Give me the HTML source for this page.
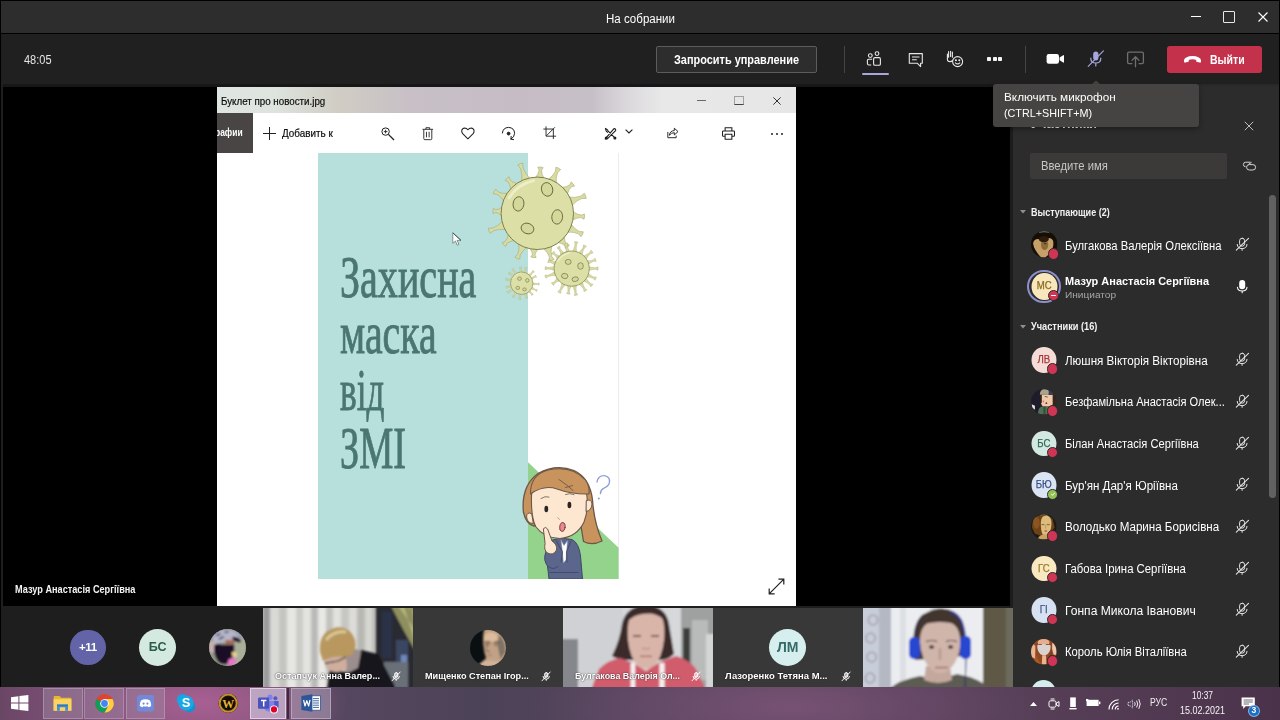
<!DOCTYPE html>
<html><head><meta charset="utf-8"><title>Teams</title>
<style>
*{box-sizing:border-box;margin:0;padding:0}
html,body{width:1280px;height:720px;overflow:hidden;background:#000;font-family:"Liberation Sans",sans-serif;}
.a{position:absolute}
.tx{position:absolute;white-space:nowrap;transform-origin:left top;display:block}
svg{position:absolute;overflow:visible}
#titlebar{left:1px;top:1px;width:1278px;height:32px;background:#2d2d2d;}
#toolbar{left:1px;top:34px;width:1278px;height:53px;background:linear-gradient(180deg,#202020 0,#202020 49.5px,#171717 50.5px,#161616 53px);}
#stage{left:3px;top:87px;width:1007px;height:519px;background:#000}
#strip{left:1px;top:606px;width:1012px;height:82px;background:#1e1e1e}
#panel{left:1013px;top:84px;width:266px;height:604px;background:linear-gradient(180deg,#262626 0,#2c2c2c 3px,#2c2c2c 100%);}
#pgap{left:1010px;top:87px;width:3px;height:601px;background:#1d1d1d}
#lgap{left:1px;top:34px;width:2px;height:572px;background:#1f1f1f}
</style></head><body>
<div id="titlebar" class="a"></div><div id="toolbar" class="a"></div><div id="lgap" class="a"></div><div id="stage" class="a"></div><div id="pgap" class="a"></div><div id="panel" class="a"></div><div id="strip" class="a"></div>
<span class="tx" style="left:605.80px;top:12.84px;font-size:12px;line-height:12px;color:#fff;transform:scaleX(0.9617);">На собрании</span>
<div class="a" style="left:1191px;top:16px;width:10px;height:1px;background:#fff"></div>
<div class="a" style="left:1223px;top:11px;width:12px;height:12px;border:1px solid #e8e8e8;border-radius:1px"></div>
<svg style="left:1258px;top:11.5px" width="10" height="10" viewBox="0 0 10 10"><path d="M0.5 0.5L9.5 9.5M9.5 0.5L0.5 9.5" stroke="#fff" stroke-width="1.1" fill="none"/></svg>
<span class="tx" style="left:24.00px;top:53.84px;font-size:12px;line-height:12px;color:#e6e6e6;transform:scaleX(0.9157);">48:05</span>
<div class="a" style="left:656px;top:46px;width:161px;height:27px;border:1px solid #5c5c5c;border-radius:2px;background:#2d2d2d"></div>
<span class="tx" style="left:673.80px;top:53.00px;font-size:13px;line-height:13px;color:#fff;font-weight:700;transform:scaleX(0.8412);">Запросить управление</span>
<div class="a" style="left:844px;top:46px;width:1px;height:27px;background:#444"></div>
<div class="a" style="left:1025px;top:46px;width:1px;height:27px;background:#444"></div>
<svg style="left:866px;top:51px" width="16" height="16" viewBox="0 0 16 16" fill="none" stroke="#e8e8e8" stroke-width="1.1">
<circle cx="4.3" cy="4.6" r="1.9"/><circle cx="11" cy="2.6" r="1.9"/>
<path d="M6.2 8.3H2.6Q1.4 8.3 1.4 9.5V12.6Q1.4 14 3 14H5.2"/>
<rect x="7.6" y="6.6" width="6.8" height="7.6" rx="1.3"/></svg>
<div class="a" style="left:862px;top:73px;width:27px;height:2px;background:#a6a7dc;border-radius:1px"></div>
<svg style="left:908px;top:52px" width="16" height="16" viewBox="0 0 16 16" fill="none" stroke="#e8e8e8" stroke-width="1.1">
<path d="M1.3 1.6H14.3V11.2H12.6V14.6L9.2 11.2H1.3Z" stroke-linejoin="round"/><path d="M4 5H11.5M4 7.8H8.8"/></svg>
<svg style="left:946px;top:50px" width="18" height="18" viewBox="0 0 18 18" fill="none" stroke="#e8e8e8" stroke-width="1.1">
<path d="M2.6 1.6V7.2M4.6 1.2V6.4M6.4 2V7.2M1.4 4V9.2Q1.4 11.6 4 11.6Q5.6 11.6 6.4 10.6" stroke-linecap="round"/>
<circle cx="11.6" cy="11.6" r="5"/><circle cx="9.9" cy="10.3" r="0.5" fill="#e8e8e8"/><circle cx="13.3" cy="10.3" r="0.5" fill="#e8e8e8"/><path d="M9.4 12.8Q11.6 15 13.8 12.8" stroke-linecap="round"/></svg>
<div class="a" style="left:987.3px;top:57.2px;width:3.8px;height:4px;background:#f4f4f4;border-radius:0.8px"></div>
<div class="a" style="left:992.8px;top:57.2px;width:3.8px;height:4px;background:#f4f4f4;border-radius:0.8px"></div>
<div class="a" style="left:998.3px;top:57.2px;width:3.8px;height:4px;background:#f4f4f4;border-radius:0.8px"></div>
<svg style="left:1046px;top:53px" width="19" height="12" viewBox="0 0 19 12"><rect x="0.6" y="1" width="12.4" height="9.8" rx="2.2" fill="#fff"/><path d="M13.6 4.6L17.2 2.2Q18 1.8 18 2.8V9Q18 10 17.2 9.6L13.6 7.2Z" fill="#fff"/></svg>
<svg style="left:1087px;top:50px" width="18" height="18" viewBox="0 0 18 18" fill="none" stroke="#a6a7dc">
<rect x="6.2" y="1.4" width="5.2" height="9" rx="2.6" fill="#a6a7dc" stroke="none"/>
<path d="M3.8 8.2Q3.8 13 8.8 13Q13.8 13 13.8 8.2M8.8 13V16" stroke-width="1.2" stroke-linecap="round"/>
<path d="M1.2 16.4L16.4 0.8" stroke-width="1.1" stroke-linecap="round"/></svg>
<svg style="left:1126px;top:51px" width="19" height="17" viewBox="0 0 19 17" fill="none" stroke="#6f6f6f" stroke-width="1.3">
<path d="M6.4 12.6H3Q1.6 12.6 1.6 11.2V2.6Q1.6 1.2 3 1.2H16Q17.4 1.2 17.4 2.6V11.2Q17.4 12.6 16 12.6H12.6"/>
<path d="M9.5 15.8V6.2M6 9.4L9.5 5.8L13 9.4" stroke-linecap="round" stroke-linejoin="round"/></svg>
<div class="a" style="left:1167px;top:46px;width:95px;height:27px;background:#c4314b;border-radius:3px"></div>
<svg style="left:1183px;top:55px" width="19" height="9" viewBox="0 0 19 9"><path d="M1 5.6Q1 3.4 3.2 2.4Q6 1.1 9.5 1.1Q13 1.1 15.8 2.4Q18 3.4 18 5.6V6.6Q18 7.8 16.8 7.6L14.2 7.1Q13.2 6.9 13.2 5.9V4.9Q11.6 4.2 9.5 4.2Q7.4 4.2 5.8 4.9V5.9Q5.8 6.9 4.8 7.1L2.2 7.6Q1 7.8 1 6.6Z" fill="#fff"/></svg>
<span class="tx" style="left:1209.70px;top:53.00px;font-size:13px;line-height:13px;color:#fff;font-weight:700;transform:scaleX(0.8076);">Выйти</span>
<svg style="left:1244px;top:121px" width="10" height="10" viewBox="0 0 10 10"><path d="M0.8 0.8L9.2 9.2M9.2 0.8L0.8 9.2" stroke="#cfcfcf" stroke-width="0.9" fill="none"/></svg>
<svg style="left:1242px;top:160px" width="15" height="12" viewBox="1242 160 15 12" fill="none" stroke="#d4d4d4" stroke-width="1"><path d="M1250.6 162.2H1245.8Q1243.4 162.2 1243.4 164.5Q1243.4 166.6 1245.6 166.8"/><rect x="1246.6" y="164.6" width="9" height="5.4" rx="2.7"/><path d="M1248.4 164.4L1251.6 162.3"/></svg>
<div class="a" style="left:1030px;top:152.5px;width:197px;height:26.5px;background:#3b3a39;border-radius:2px"></div>
<span class="tx" style="left:1040.50px;top:159.84px;font-size:12px;line-height:12px;color:#c8c6c4;transform:scaleX(0.9384);">Введите имя</span>
<div class="a" style="left:1269px;top:195px;width:7px;height:303px;background:#616161;border-radius:3.5px"></div>
<span class="tx" style="left:1031.00px;top:116.35px;font-size:14px;line-height:14px;color:#fff;font-weight:700;transform:scaleX(0.9173);">Участники</span>
<svg style="left:1019.5px;top:210px" width="6" height="4" viewBox="0 0 6 4"><path d="M0 0H6L3 3.6Z" fill="#8f8f8f"/></svg>
<span class="tx" style="left:1030.70px;top:207.53px;font-size:10px;line-height:10px;color:#f2f2f2;font-weight:700;transform:scaleX(0.9012);">Выступающие (2)</span>
<svg style="left:1019.5px;top:325.4px" width="6" height="4" viewBox="0 0 6 4"><path d="M0 0H6L3 3.6Z" fill="#8f8f8f"/></svg>
<span class="tx" style="left:1030.70px;top:322.24px;font-size:10px;line-height:10px;color:#f2f2f2;font-weight:700;transform:scaleX(0.9228);">Участники (16)</span>
<svg style="left:1030.8px;top:231.3px" width="26.4" height="26.4" viewBox="0 0 26 26"><defs><clipPath id="c1"><circle cx="13.0" cy="13.0" r="13.0"/></clipPath><filter id="f1" x="-10%" y="-10%" width="120%" height="120%"><feGaussianBlur stdDeviation="0.55"/></filter></defs><g clip-path="url(#c1)"><rect width="26" height="26" fill="#140e07"/><g filter="url(#f1)"><path d="M2 12Q3 7 9 8L18 7Q23 8 22 14Q21 21 14 26H10Q3 19 2 12Z" fill="#c5a067"/><ellipse cx="13.4" cy="13.6" rx="3.6" ry="5.2" fill="#8d6c3a"/><ellipse cx="12.6" cy="8" rx="5" ry="3" fill="#2a1a0c"/><ellipse cx="14" cy="12.4" rx="1.2" ry="0.8" fill="#4a3418"/><path d="M8 1.2Q13 0.2 18 1.2" stroke="#c8c8c8" stroke-width="0.6" fill="none"/></g></g></svg>
<div class="a" style="left:1047.8px;top:248.2px;width:11.6px;height:11.6px;border-radius:50%;background:#d03555;border:1.7px solid #2a2a2a"></div>
<span class="tx" style="left:1064.50px;top:239.74px;font-size:12px;line-height:12px;color:#fff;transform:scaleX(0.9377);">Булгакова Валерія Олексіївна</span>
<svg style="left:1234px;top:236.1px" width="16" height="17" viewBox="0 0 16 17" fill="none" stroke="#e4e4e4" stroke-width="1" stroke-linecap="round"><rect x="5.6" y="2.2" width="5" height="8" rx="2.5"/><path d="M3.2 8.4Q3.4 12.6 8.1 12.6Q12.8 12.6 13 8.4M8.1 12.8V14.4"/><path d="M2.3 14.2L14.5 2.4" stroke-width="1.1"/></svg>
<div class="a" style="left:1027.2px;top:269.6px;width:33.8px;height:33.8px;border-radius:50%;border:2px solid #8d8fcc"></div>
<div class="a" style="left:1030.8px;top:273.2px;width:26.5px;height:26.5px;border-radius:50%;background:#f8e6bd;color:#8a6a1e;font-size:10px;line-height:26.5px;text-align:center;letter-spacing:0;transform:scaleX(0.96);-webkit-text-stroke:0.25px #8a6a1e">МС</div>
<div class="a" style="left:1047.8px;top:289.7px;width:11.6px;height:11.6px;border-radius:50%;background:#d03555;border:1.7px solid #2a2a2a"></div><div class="a" style="left:1051.2px;top:294.8px;width:4.8px;height:1.4px;background:#fff;border-radius:1px"></div>
<span class="tx" style="left:1064.50px;top:275.89px;font-size:11px;line-height:11px;color:#fff;font-weight:700;transform:scaleX(0.9964);">Мазур Анастасія Сергіївна</span>
<span class="tx" style="left:1064.50px;top:290.26px;font-size:9.5px;line-height:9.5px;color:#a6a6a6;transform:scaleX(1.0622);">Инициатор</span>
<svg style="left:1234px;top:278.0px" width="16" height="17" viewBox="0 0 16 17" fill="none" stroke="#fff" stroke-width="1.1" stroke-linecap="round"><rect x="5.2" y="2" width="6" height="9.2" rx="3" fill="#fff" stroke="none"/><path d="M3.4 9.2Q3.8 13 8.2 13Q12.6 13 13 9.2M8.2 13.2V14.8"/></svg>
<div class="a" style="left:1030.8px;top:347.2px;width:25.6px;height:25.6px;border-radius:50%;background:#f6dcd6;color:#a4373a;font-size:10px;line-height:25.6px;text-align:center;letter-spacing:0;transform:scaleX(0.96);-webkit-text-stroke:0.25px #a4373a">ЛВ</div>
<div class="a" style="left:1046.8px;top:363.4px;width:11.6px;height:11.6px;border-radius:50%;background:#d03555;border:1.7px solid #2a2a2a"></div>
<span class="tx" style="left:1064.50px;top:354.54px;font-size:12px;line-height:12px;color:#fff;transform:scaleX(0.9679);">Люшня Вікторія Вікторівна</span>
<svg style="left:1234px;top:351.2px" width="16" height="17" viewBox="0 0 16 17" fill="none" stroke="#e4e4e4" stroke-width="1" stroke-linecap="round"><rect x="5.6" y="2.2" width="5" height="8" rx="2.5"/><path d="M3.2 8.4Q3.4 12.6 8.1 12.6Q12.8 12.6 13 8.4M8.1 12.8V14.4"/><path d="M2.3 14.2L14.5 2.4" stroke-width="1.1"/></svg>
<svg style="left:1030.8px;top:388.9px" width="25.6" height="25.6" viewBox="0 0 26 26"><defs><clipPath id="c2"><circle cx="13.0" cy="13.0" r="13.0"/></clipPath><filter id="f2" x="-10%" y="-10%" width="120%" height="120%"><feGaussianBlur stdDeviation="0.55"/></filter></defs><g clip-path="url(#c2)"><rect width="26" height="26" fill="#26222d"/><g filter="url(#f2)"><rect x="0" y="0" width="10" height="26" fill="#1e1a2c"/><rect x="18" y="2" width="8" height="18" fill="#33281f"/><path d="M10.2 6H22V15Q22 18 18 18H13Q10.2 17 10.2 13Z" fill="#f0c9aa"/><path d="M9 5.8Q9 0 14 0.2Q18.5 0.4 18.4 3.2L18 6Z" fill="#aaa38c"/><path d="M18 1Q23 2 23 8L22.4 6H18Z" fill="#3a3a55"/><path d="M7 26Q7 18 12 17.6H18.4V26Z" fill="#4f6f55"/><rect x="12.6" y="18" width="2.2" height="8" fill="#35503b"/><path d="M0.6 15.4L4 17V21L1.4 19Z" fill="#e8e0e0"/><circle cx="15.6" cy="14.4" r="0.9" fill="#6a2a20"/><circle cx="12.6" cy="12.6" r="0.9" fill="#e07868"/><rect x="9.8" y="6" width="1.2" height="8" fill="#3a2618"/><path d="M14 7.6L17 8.2" stroke="#3a2618" stroke-width="0.7"/></g></g></svg><!--401.7-->
<div class="a" style="left:1046.8px;top:405.1px;width:11.6px;height:11.6px;border-radius:50%;background:#d03555;border:1.7px solid #2a2a2a"></div>
<span class="tx" style="left:1064.50px;top:396.24px;font-size:12px;line-height:12px;color:#fff;transform:scaleX(0.9239);">Безфамільна Анастасія Олек...</span>
<svg style="left:1234px;top:392.9px" width="16" height="17" viewBox="0 0 16 17" fill="none" stroke="#e4e4e4" stroke-width="1" stroke-linecap="round"><rect x="5.6" y="2.2" width="5" height="8" rx="2.5"/><path d="M3.2 8.4Q3.4 12.6 8.1 12.6Q12.8 12.6 13 8.4M8.1 12.8V14.4"/><path d="M2.3 14.2L14.5 2.4" stroke-width="1.1"/></svg>
<div class="a" style="left:1030.8px;top:430.6px;width:25.6px;height:25.6px;border-radius:50%;background:#d3e8e0;color:#2f6b55;font-size:10px;line-height:25.6px;text-align:center;letter-spacing:0;transform:scaleX(0.96);-webkit-text-stroke:0.25px #2f6b55">БС</div>
<div class="a" style="left:1046.8px;top:446.8px;width:11.6px;height:11.6px;border-radius:50%;background:#d03555;border:1.7px solid #2a2a2a"></div>
<span class="tx" style="left:1064.50px;top:437.94px;font-size:12px;line-height:12px;color:#fff;transform:scaleX(0.9286);">Білан Анастасія Сергіївна</span>
<svg style="left:1234px;top:434.6px" width="16" height="17" viewBox="0 0 16 17" fill="none" stroke="#e4e4e4" stroke-width="1" stroke-linecap="round"><rect x="5.6" y="2.2" width="5" height="8" rx="2.5"/><path d="M3.2 8.4Q3.4 12.6 8.1 12.6Q12.8 12.6 13 8.4M8.1 12.8V14.4"/><path d="M2.3 14.2L14.5 2.4" stroke-width="1.1"/></svg>
<div class="a" style="left:1030.8px;top:472.3px;width:25.6px;height:25.6px;border-radius:50%;background:#dbe4f3;color:#3c5288;font-size:10px;line-height:25.6px;text-align:center;letter-spacing:0;transform:scaleX(0.96);-webkit-text-stroke:0.25px #3c5288">БЮ</div>
<div class="a" style="left:1046.8px;top:488.5px;width:11.6px;height:11.6px;border-radius:50%;background:#92c353;border:1.6px solid #2c2c2c"></div><svg style="left:1049.6px;top:491.3px" width="6" height="6" viewBox="0 0 6 6"><path d="M1.2 3.1L2.5 4.3L4.8 1.8" stroke="#fff" stroke-width="1" fill="none"/></svg>
<span class="tx" style="left:1064.50px;top:479.64px;font-size:12px;line-height:12px;color:#fff;transform:scaleX(0.9651);">Бур'ян Дар'я Юріївна</span>
<svg style="left:1234px;top:476.3px" width="16" height="17" viewBox="0 0 16 17" fill="none" stroke="#e4e4e4" stroke-width="1" stroke-linecap="round"><rect x="5.6" y="2.2" width="5" height="8" rx="2.5"/><path d="M3.2 8.4Q3.4 12.6 8.1 12.6Q12.8 12.6 13 8.4M8.1 12.8V14.4"/><path d="M2.3 14.2L14.5 2.4" stroke-width="1.1"/></svg>
<svg style="left:1030.8px;top:514.0px" width="25.6" height="25.6" viewBox="0 0 26 26"><defs><clipPath id="c3"><circle cx="13.0" cy="13.0" r="13.0"/></clipPath><filter id="f3" x="-10%" y="-10%" width="120%" height="120%"><feGaussianBlur stdDeviation="0.55"/></filter></defs><g clip-path="url(#c3)"><rect width="26" height="26" fill="#1b1a13"/><g filter="url(#f3)"><path d="M1 14Q1 2 10 1Q16 -1 22 5L24 14L20 18L10 22L4 20Z" fill="#6d4218"/><ellipse cx="5.5" cy="9" rx="3.4" ry="6" fill="#8a5420"/><path d="M10 8Q10.5 1.6 15.6 1.6Q20.6 2.4 20.8 9Q21 16 17.4 21.6Q15 24.4 12.4 22Q9.6 17 10 8Z" fill="#dcbb7c"/><path d="M9 22L13 20.6L19 21L22 26H6Z" fill="#c9a262"/><path d="M10.6 10.8H13.6M16 10.8H19" stroke="#5a3a18" stroke-width="0.7"/><ellipse cx="15" cy="17.2" rx="1.5" ry="0.8" fill="#b0553a"/><path d="M14.8 11V15" stroke="#b8945a" stroke-width="0.8"/><path d="M9 1.2Q13 0.2 17 1.2" stroke="#8a8470" stroke-width="0.5" fill="none"/></g></g></svg><!--526.8-->
<div class="a" style="left:1046.8px;top:530.2px;width:11.6px;height:11.6px;border-radius:50%;background:#d03555;border:1.7px solid #2a2a2a"></div>
<span class="tx" style="left:1064.50px;top:521.34px;font-size:12px;line-height:12px;color:#fff;transform:scaleX(0.9655);">Володько Марина Борисівна</span>
<svg style="left:1234px;top:518.0px" width="16" height="17" viewBox="0 0 16 17" fill="none" stroke="#e4e4e4" stroke-width="1" stroke-linecap="round"><rect x="5.6" y="2.2" width="5" height="8" rx="2.5"/><path d="M3.2 8.4Q3.4 12.6 8.1 12.6Q12.8 12.6 13 8.4M8.1 12.8V14.4"/><path d="M2.3 14.2L14.5 2.4" stroke-width="1.1"/></svg>
<div class="a" style="left:1030.8px;top:555.7px;width:25.6px;height:25.6px;border-radius:50%;background:#f9e9c0;color:#9a7b2c;font-size:10px;line-height:25.6px;text-align:center;letter-spacing:0;transform:scaleX(0.96);-webkit-text-stroke:0.25px #9a7b2c">ГС</div>
<div class="a" style="left:1046.8px;top:571.9px;width:11.6px;height:11.6px;border-radius:50%;background:#d03555;border:1.7px solid #2a2a2a"></div>
<span class="tx" style="left:1064.50px;top:563.04px;font-size:12px;line-height:12px;color:#fff;transform:scaleX(0.9466);">Габова Ірина Сергіївна</span>
<svg style="left:1234px;top:559.7px" width="16" height="17" viewBox="0 0 16 17" fill="none" stroke="#e4e4e4" stroke-width="1" stroke-linecap="round"><rect x="5.6" y="2.2" width="5" height="8" rx="2.5"/><path d="M3.2 8.4Q3.4 12.6 8.1 12.6Q12.8 12.6 13 8.4M8.1 12.8V14.4"/><path d="M2.3 14.2L14.5 2.4" stroke-width="1.1"/></svg>
<div class="a" style="left:1030.8px;top:597.4px;width:25.6px;height:25.6px;border-radius:50%;background:#d6e2f2;color:#47598a;font-size:10px;line-height:25.6px;text-align:center;letter-spacing:0;transform:scaleX(0.96);-webkit-text-stroke:0.25px #47598a">ГІ</div>
<div class="a" style="left:1046.8px;top:613.6px;width:11.6px;height:11.6px;border-radius:50%;background:#d03555;border:1.7px solid #2a2a2a"></div>
<span class="tx" style="left:1064.50px;top:604.74px;font-size:12px;line-height:12px;color:#fff;transform:scaleX(1.0062);">Гонпа Микола Іванович</span>
<svg style="left:1234px;top:601.4px" width="16" height="17" viewBox="0 0 16 17" fill="none" stroke="#e4e4e4" stroke-width="1" stroke-linecap="round"><rect x="5.6" y="2.2" width="5" height="8" rx="2.5"/><path d="M3.2 8.4Q3.4 12.6 8.1 12.6Q12.8 12.6 13 8.4M8.1 12.8V14.4"/><path d="M2.3 14.2L14.5 2.4" stroke-width="1.1"/></svg>
<svg style="left:1030.8px;top:639.1px" width="25.6" height="25.6" viewBox="0 0 26 26"><defs><clipPath id="c4"><circle cx="13.0" cy="13.0" r="13.0"/></clipPath><filter id="f4" x="-10%" y="-10%" width="120%" height="120%"><feGaussianBlur stdDeviation="0.55"/></filter></defs><g clip-path="url(#c4)"><rect width="26" height="26" fill="#7a3c1c"/><g filter="url(#f4)"><rect width="26" height="26" fill="#8e4a22"/><path d="M0 6Q2 4 4.4 7V20L0 18Z" fill="#e8b494"/><ellipse cx="12.8" cy="3.6" rx="6" ry="4" fill="#e6ae8e"/><path d="M6.4 6.4Q13 3.6 19.8 6.4Q20.4 12 16.8 15.6Q13 17.6 9.6 15.6Q6 12 6.4 6.4Z" fill="#d9d2cf"/><path d="M21.6 4Q26 4 26 8V16H23Q20.6 10 21.6 4Z" fill="#ecc6ae"/><path d="M11.4 16.4H15.2L15.8 26H11Z" fill="#eab48e"/><path d="M4.4 8Q4 18 9 24L11 26H4Z" fill="#a85a2c"/><path d="M20.6 8Q20.4 16 16 22V26H22Z" fill="#7c3c1a"/><path d="M8 5.6H11M15 5.6H18" stroke="#4a2a18" stroke-width="0.7"/></g></g></svg><!--651.9-->
<div class="a" style="left:1046.8px;top:655.3px;width:11.6px;height:11.6px;border-radius:50%;background:#d03555;border:1.7px solid #2a2a2a"></div>
<span class="tx" style="left:1064.50px;top:646.44px;font-size:12px;line-height:12px;color:#fff;transform:scaleX(0.9383);">Король Юлія Віталіївна</span>
<svg style="left:1234px;top:643.1px" width="16" height="17" viewBox="0 0 16 17" fill="none" stroke="#e4e4e4" stroke-width="1" stroke-linecap="round"><rect x="5.6" y="2.2" width="5" height="8" rx="2.5"/><path d="M3.2 8.4Q3.4 12.6 8.1 12.6Q12.8 12.6 13 8.4M8.1 12.8V14.4"/><path d="M2.3 14.2L14.5 2.4" stroke-width="1.1"/></svg>
<div class="a" style="left:1030.8px;top:680.3px;width:25.6px;height:25.6px;border-radius:50%;background:#d4ecee"></div>
<svg style="left:1091px;top:80px" width="10" height="5" viewBox="0 0 10 5"><path d="M0 5L5 0.4L10 5Z" fill="#454443"/></svg>
<div class="a" style="left:993px;top:84px;width:206px;height:42.7px;background:#454443;border-radius:3px;box-shadow:0 2px 5px rgba(0,0,0,.35)"></div>
<span class="tx" style="left:1003.80px;top:91.59px;font-size:11px;line-height:11px;color:#fff;transform:scaleX(1.0699);">Включить микрофон</span>
<span class="tx" style="left:1003.80px;top:107.59px;font-size:11px;line-height:11px;color:#fff;transform:scaleX(0.9795);">(CTRL+SHIFT+M)</span>
<div class="a" style="left:217px;top:87px;width:579px;height:518.5px;background:#fff"></div>
<div class="a" style="left:217px;top:87px;width:579px;height:26px;background:linear-gradient(90deg,#dfe6e2 0px,#dde3dd 60px,#d0cdc4 120px,#c8c0c6 190px,#c5bcc6 300px,#c7bfc8 375px,#dcd9dd 412px,#e8e8e8 445px,#e6e6e6 579px)"></div>
<span class="tx" style="left:221.00px;top:95.99px;font-size:11px;line-height:11px;color:#0c0c0c;transform:scaleX(0.8886);-webkit-text-stroke:0.2px #0c0c0c;">Буклет про новости.jpg</span>
<div class="a" style="left:696.5px;top:100px;width:9px;height:1px;background:#6a6a6a"></div>
<div class="a" style="left:734px;top:95.5px;width:9.5px;height:9.5px;border:1px solid #a0a0a0;border-bottom-color:#444"></div>
<svg style="left:772.5px;top:96.5px" width="8" height="8" viewBox="0 0 8 8"><path d="M0.4 0.4L7.6 7.6M7.6 0.4L0.4 7.6" stroke="#333" stroke-width="1" fill="none"/></svg>
<div class="a" style="left:217px;top:113px;width:35.8px;height:39.6px;background:#484544"></div>
<span class="tx" style="left:215.20px;top:127.39px;font-size:11px;line-height:11px;color:#fff;font-weight:700;transform:scaleX(0.7667);">рафии</span>
<div class="a" style="left:207px;top:113px;width:10px;height:40px;background:#000"></div>
<svg style="left:262.5px;top:127px" width="13" height="13" viewBox="0 0 13 13"><path d="M6.5 0V13M0 6.5H13" stroke="#222" stroke-width="1"/></svg>
<span class="tx" style="left:282.20px;top:127.59px;font-size:11px;line-height:11px;color:#0c0c0c;transform:scaleX(0.8994);-webkit-text-stroke:0.2px #0c0c0c;">Добавить к</span>
<svg style="left:380.6px;top:126.6px" width="14" height="14" viewBox="0 0 14 14" fill="none" stroke="#1e1e1e" stroke-width="1"><circle cx="4.6" cy="4.6" r="3.7"/><path d="M7.4 7.4L13 13" stroke-width="1.3"/><path d="M4.6 2.8V6.4M2.8 4.6H6.4" stroke-width="0.9"/></svg>
<svg style="left:421.5px;top:126.8px" width="11.6" height="13.4" viewBox="0 0 13 15" fill="none" stroke="#1e1e1e" stroke-width="1"><path d="M0.6 2.6H12.4M4.4 2.4V0.8H8.6V2.4M2 2.8V13Q2 14.2 3.2 14.2H9.8Q11 14.2 11 13V2.8M5 5.4V11.6M8 5.4V11.6"/></svg>
<svg style="left:461.2px;top:127px" width="13.8" height="12.9" viewBox="0 0 15 14" fill="none" stroke="#1e1e1e" stroke-width="1"><path d="M7.5 12.8L1.8 7.2Q0.6 5.8 0.8 4Q1.2 1.2 4 1Q6 1 7.5 3Q9 1 11 1Q13.8 1.2 14.2 4Q14.4 5.8 13.2 7.2Z" stroke-width="1.1" stroke-linejoin="round"/></svg>
<svg style="left:501px;top:125.5px" width="15" height="15" viewBox="0 0 15 15" fill="none" stroke="#1e1e1e" stroke-width="1"><path d="M1.4 7Q1.8 1.6 7.6 1.4Q13.4 1.8 13.6 7.4Q13.4 11.4 10 13M10.2 10.4L9.8 13.2L12.6 13.6" stroke-linecap="round"/><circle cx="7.6" cy="7.6" r="1.4" fill="#1e1e1e"/></svg>
<svg style="left:543px;top:126.2px" width="13.4" height="13.4" viewBox="0 0 15 15" fill="none" stroke="#1e1e1e" stroke-width="1"><path d="M3.4 0.4V11.4H14.6M0.4 3.4H11.6V14.6M3.6 11.2L13.4 1.4"/></svg>
<svg style="left:604.2px;top:126.6px" width="13.2" height="13.2" viewBox="0 0 15 15" fill="none" stroke="#1e1e1e" stroke-width="1.25"><path d="M1.4 13.6L10.6 2.6Q11.8 1.2 13 2.4Q14 3.6 12.6 4.8L3.8 13.4ZM13.4 13.4L4.8 4.6Q3.8 2.2 1.6 1.6L2.2 3.8Q2.6 5.6 4.6 6.2" stroke-linejoin="round"/><circle cx="2.6" cy="12.4" r="1.1" fill="#1e1e1e"/><circle cx="12.4" cy="12.4" r="1.1" fill="#1e1e1e"/></svg>
<svg style="left:625px;top:128.5px" width="8" height="5" viewBox="0 0 8 5" fill="none" stroke="#1e1e1e" stroke-width="1"><path d="M0.6 0.6L4 4L7.4 0.6" stroke-width="1.1"/></svg>
<svg style="left:665.2px;top:125.8px" width="14" height="13" viewBox="0 0 15 14" fill="none" stroke="#1e1e1e" stroke-width="1"><path d="M3 6.4V12.6H12V10.4" /><path d="M4.6 10Q5.4 5 10 5V2.4L14 6L10 9.6V7.2Q6.6 7.2 4.6 10Z" stroke-linejoin="round"/></svg>
<svg style="left:722.2px;top:126.8px" width="13" height="13" viewBox="0 0 15 15" fill="none" stroke="#1e1e1e" stroke-width="1"><path d="M3.6 4.4V0.8H11.4V4.4M3.4 10.6H1.4Q0.6 10.6 0.6 9.8V5.4Q0.6 4.6 1.4 4.6H13.6Q14.4 4.6 14.4 5.4V9.8Q14.4 10.6 13.6 10.6H11.6M3.6 8.4H11.4V14.2H3.6Z" stroke-width="1.2"/></svg>
<div class="a" style="left:771.3px;top:133px;width:2px;height:2px;background:#222;border-radius:50%"></div>
<div class="a" style="left:776.2px;top:133px;width:2px;height:2px;background:#222;border-radius:50%"></div>
<div class="a" style="left:781.1px;top:133px;width:2px;height:2px;background:#222;border-radius:50%"></div>
<div class="a" style="left:318px;top:153px;width:210.4px;height:426px;background:#b7dfdc"></div>
<div class="a" style="left:618px;top:153px;width:1px;height:426px;background:#ececec"></div>
<svg style="left:528.4px;top:153px" width="90.6" height="426" viewBox="0 0 90.6 426"><path d="M0 309.2L90.6 394.8V426H0Z" fill="#94d38c"/></svg>
<span class="tx" style="left:340.40px;top:246.55px;font-size:60px;line-height:60px;color:#4a7672;font-family:'Liberation Serif',serif;transform:scaleX(0.6681);-webkit-text-stroke:0.9px #4a7672;">Захисна</span>
<span class="tx" style="left:340.40px;top:302.65px;font-size:60px;line-height:60px;color:#4a7672;font-family:'Liberation Serif',serif;transform:scaleX(0.6630);-webkit-text-stroke:0.9px #4a7672;">маска</span>
<span class="tx" style="left:340.40px;top:360.25px;font-size:60px;line-height:60px;color:#4a7672;font-family:'Liberation Serif',serif;transform:scaleX(0.5878);-webkit-text-stroke:0.9px #4a7672;">від</span>
<span class="tx" style="left:340.40px;top:418.05px;font-size:60px;line-height:60px;color:#4a7672;font-family:'Liberation Serif',serif;transform:scaleX(0.6384);-webkit-text-stroke:0.9px #4a7672;">ЗМІ</span>
<svg style="left:768px;top:578px" width="17" height="17" viewBox="0 0 17 17" fill="none" stroke="#222" stroke-width="1.2"><path d="M1.4 15.6L15.6 1.4M10.4 1.2H15.8V6.6M1.2 10.4V15.8H6.6"/></svg>
<svg style="left:452.4px;top:232.4px" width="11" height="15" viewBox="0 0 11 15"><path d="M0.8 0.8V11.4L3.4 9L5.2 13.2L6.9 12.4L5.1 8.4H9Z" fill="#fff" stroke="#5c6a68" stroke-width="0.7" stroke-linejoin="round"/><path d="M0.8 0.8L9 8.4" stroke="#3a4a48" stroke-width="0.9"/></svg>
<span class="tx" style="left:14.60px;top:584.74px;font-size:10px;line-height:10px;color:#f4f4f4;font-weight:700;transform:scaleX(0.9165);">Мазур Анастасія Сергіївна</span>
<svg style="left:470px;top:150px" width="160" height="160" viewBox="470 150 160 160"><path d="M529.9 178.4Q524.9 173.4 523.0 167.9L522.9 163.2Q520.1 163.2 517.8 165.0L520.6 168.7Q522.5 174.3 521.7 181.2Z" fill="#d9dca2" stroke="#9c9e62" stroke-width="0.50" stroke-linejoin="round"/><path d="M544.1 178.3Q541.3 173.9 541.6 170.2L543.2 167.6Q540.6 166.5 537.8 167.2L539.1 170.1Q538.8 173.7 535.4 177.7Z" fill="#d9dca2" stroke="#9c9e62" stroke-width="0.50" stroke-linejoin="round"/><path d="M556.2 183.1Q555.7 176.8 557.8 172.3L560.7 169.6Q558.6 167.6 555.8 167.3L555.5 171.3Q553.4 175.7 548.3 179.4Z" fill="#d9dca2" stroke="#9c9e62" stroke-width="0.50" stroke-linejoin="round"/><path d="M567.4 194.1Q568.7 189.1 571.5 186.8L574.5 186.1Q573.5 183.4 571.1 181.9L569.9 184.8Q567.1 187.1 561.9 187.4Z" fill="#d9dca2" stroke="#9c9e62" stroke-width="0.50" stroke-linejoin="round"/><path d="M572.1 205.3Q576.6 200.3 581.8 198.5L586.2 198.4Q586.1 195.5 584.3 193.3L580.9 196.1Q575.8 198.0 569.1 197.1Z" fill="#d9dca2" stroke="#9c9e62" stroke-width="0.50" stroke-linejoin="round"/><path d="M572.3 220.1Q577.1 217.4 581.1 217.6L584.0 219.3Q585.1 216.6 584.4 213.9L581.3 215.1Q577.3 214.8 572.9 211.4Z" fill="#d9dca2" stroke="#9c9e62" stroke-width="0.50" stroke-linejoin="round"/><path d="M567.5 232.2Q573.8 231.7 578.3 233.8L581.0 236.7Q583.0 234.6 583.3 231.8L579.3 231.5Q574.9 229.4 571.2 224.3Z" fill="#d9dca2" stroke="#9c9e62" stroke-width="0.50" stroke-linejoin="round"/><path d="M557.8 242.5Q562.6 243.3 564.8 245.8L565.4 248.6Q568.0 247.4 569.4 244.9L566.7 244.1Q564.5 241.6 564.2 236.7Z" fill="#d9dca2" stroke="#9c9e62" stroke-width="0.50" stroke-linejoin="round"/><path d="M543.5 248.4Q548.0 252.6 549.4 257.1L549.0 261.0Q551.9 261.1 554.2 259.4L551.8 256.4Q550.4 251.8 551.8 245.9Z" fill="#d9dca2" stroke="#9c9e62" stroke-width="0.50" stroke-linejoin="round"/><path d="M529.9 248.2Q532.6 252.0 532.4 254.8L530.8 256.9Q533.4 258.1 536.2 257.4L534.9 255.1Q535.2 252.2 538.5 248.9Z" fill="#d9dca2" stroke="#9c9e62" stroke-width="0.50" stroke-linejoin="round"/><path d="M518.9 243.9Q519.6 249.9 517.7 254.3L514.9 257.0Q517.0 258.9 519.9 259.2L520.0 255.3Q521.9 251.0 526.9 247.4Z" fill="#d9dca2" stroke="#9c9e62" stroke-width="0.50" stroke-linejoin="round"/><path d="M508.4 234.3Q507.5 239.3 505.0 241.7L502.0 242.5Q503.2 245.1 505.7 246.5L506.7 243.6Q509.3 241.2 514.4 240.6Z" fill="#d9dca2" stroke="#9c9e62" stroke-width="0.50" stroke-linejoin="round"/><path d="M502.5 221.3Q498.0 226.3 492.8 228.1L488.4 228.2Q488.5 231.1 490.3 233.3L493.7 230.5Q498.8 228.6 505.5 229.5Z" fill="#d9dca2" stroke="#9c9e62" stroke-width="0.50" stroke-linejoin="round"/><path d="M502.2 207.1Q498.5 210.0 495.6 209.8L493.5 208.3Q492.4 210.9 493.2 213.7L495.5 212.4Q498.4 212.5 501.7 215.8Z" fill="#d9dca2" stroke="#9c9e62" stroke-width="0.50" stroke-linejoin="round"/><path d="M507.7 193.4Q501.9 193.9 498.1 191.9L495.8 189.1Q493.7 191.1 493.3 193.9L496.9 194.1Q500.8 196.1 503.8 201.1Z" fill="#d9dca2" stroke="#9c9e62" stroke-width="0.50" stroke-linejoin="round"/><path d="M517.4 183.7Q512.3 182.6 509.9 179.8L509.2 176.8Q506.5 177.9 505.1 180.4L508.0 181.5Q510.3 184.2 510.8 189.4Z" fill="#d9dca2" stroke="#9c9e62" stroke-width="0.50" stroke-linejoin="round"/><circle cx="537.3" cy="213.3" r="36.2" fill="#dcdfa6" stroke="#74763f" stroke-width="0.9"/><path d="M509.1 198.1Q517.4 184.3 533.7 180.7" stroke="#eceec6" stroke-width="2.90" fill="none" stroke-linecap="round"/><ellipse cx="547.1" cy="189.4" rx="5.6" ry="6.9" transform="rotate(-15 547.1 189.4)" fill="#d5d89b" stroke="#64663a" stroke-width="0.90"/><ellipse cx="518.5" cy="203.9" rx="5.4" ry="7.2" transform="rotate(8 518.5 203.9)" fill="#d5d89b" stroke="#64663a" stroke-width="0.90"/><ellipse cx="557.2" cy="216.9" rx="5.4" ry="7.2" transform="rotate(5 557.2 216.9)" fill="#d5d89b" stroke="#64663a" stroke-width="0.90"/><ellipse cx="527.5" cy="228.5" rx="6.5" ry="5.2" transform="rotate(20 527.5 228.5)" fill="#d5d89b" stroke="#64663a" stroke-width="0.90"/><path d="M588.5 270.6Q592.3 269.2 595.5 269.2L597.9 270.2Q598.5 268.5 597.9 266.7L595.5 267.8Q592.3 267.8 588.5 266.4Z" fill="#d9dca2" stroke="#9c9e62" stroke-width="0.33" stroke-linejoin="round"/><path d="M586.4 277.0Q590.4 277.1 593.2 278.3L594.9 280.2Q596.2 278.8 596.3 276.9L593.7 277.0Q590.9 275.8 588.0 273.1Z" fill="#d9dca2" stroke="#9c9e62" stroke-width="0.33" stroke-linejoin="round"/><path d="M583.2 281.0Q587.0 282.4 589.5 284.5L590.7 286.8Q592.3 285.9 592.9 284.2L590.4 283.4Q587.9 281.3 585.9 277.8Z" fill="#d9dca2" stroke="#9c9e62" stroke-width="0.33" stroke-linejoin="round"/><path d="M578.8 284.0Q582.0 286.4 583.6 289.1L584.0 291.6Q585.8 291.2 586.9 289.8L584.8 288.3Q583.2 285.7 582.4 281.7Z" fill="#d9dca2" stroke="#9c9e62" stroke-width="0.33" stroke-linejoin="round"/><path d="M572.3 285.5Q574.3 289.3 574.9 292.7L574.3 295.4Q576.1 295.7 577.7 294.8L576.3 292.5Q575.7 289.1 576.5 284.8Z" fill="#d9dca2" stroke="#9c9e62" stroke-width="0.33" stroke-linejoin="round"/><path d="M567.4 285.0Q568.3 288.7 567.9 291.5L566.6 293.6Q568.3 294.4 570.1 294.0L569.3 291.7Q569.7 288.8 571.6 285.5Z" fill="#d9dca2" stroke="#9c9e62" stroke-width="0.33" stroke-linejoin="round"/><path d="M562.1 282.5Q561.4 286.8 559.8 289.8L557.7 291.7Q559.0 293.0 560.8 293.3L561.1 290.5Q562.7 287.4 565.8 284.5Z" fill="#d9dca2" stroke="#9c9e62" stroke-width="0.33" stroke-linejoin="round"/><path d="M557.3 277.5Q555.6 280.6 553.6 282.3L551.4 282.7Q552.0 284.4 553.6 285.4L554.5 283.4Q556.5 281.7 559.9 280.8Z" fill="#d9dca2" stroke="#9c9e62" stroke-width="0.33" stroke-linejoin="round"/><path d="M555.0 271.5Q551.4 274.1 547.9 275.2L545.0 275.0Q544.9 276.8 546.0 278.3L548.3 276.5Q551.8 275.5 556.3 275.6Z" fill="#d9dca2" stroke="#9c9e62" stroke-width="0.33" stroke-linejoin="round"/><path d="M554.9 266.2Q551.1 267.6 547.8 267.5L545.4 266.4Q544.7 268.2 545.3 269.9L547.8 268.9Q551.0 269.0 554.9 270.4Z" fill="#d9dca2" stroke="#9c9e62" stroke-width="0.33" stroke-linejoin="round"/><path d="M556.4 261.4Q552.9 261.8 550.4 261.0L548.9 259.4Q547.8 260.8 547.8 262.7L550.0 262.3Q552.4 263.1 555.1 265.4Z" fill="#d9dca2" stroke="#9c9e62" stroke-width="0.33" stroke-linejoin="round"/><path d="M560.2 256.1Q556.8 255.1 554.8 253.4L554.0 251.3Q552.4 252.3 551.7 254.0L553.9 254.5Q555.9 256.2 557.5 259.4Z" fill="#d9dca2" stroke="#9c9e62" stroke-width="0.33" stroke-linejoin="round"/><path d="M564.6 253.2Q561.6 251.0 560.1 248.6L559.9 246.2Q558.1 246.7 556.9 248.1L558.9 249.4Q560.4 251.8 561.0 255.4Z" fill="#d9dca2" stroke="#9c9e62" stroke-width="0.33" stroke-linejoin="round"/><path d="M570.0 251.8Q567.8 248.5 567.2 245.5L567.7 243.0Q565.8 242.8 564.2 243.7L565.8 245.8Q566.5 248.8 565.9 252.7Z" fill="#d9dca2" stroke="#9c9e62" stroke-width="0.33" stroke-linejoin="round"/><path d="M576.6 252.4Q575.9 248.1 576.5 244.7L578.0 242.2Q576.3 241.3 574.5 241.7L575.1 244.4Q574.5 247.9 572.4 251.7Z" fill="#d9dca2" stroke="#9c9e62" stroke-width="0.33" stroke-linejoin="round"/><path d="M582.0 255.1Q582.7 251.1 584.3 248.2L586.5 246.6Q585.3 245.2 583.4 244.9L583.1 247.5Q581.5 250.4 578.3 253.0Z" fill="#d9dca2" stroke="#9c9e62" stroke-width="0.33" stroke-linejoin="round"/><path d="M585.9 259.4Q588.0 255.8 590.5 253.7L593.1 252.9Q592.5 251.2 590.9 250.2L589.6 252.6Q587.1 254.7 583.2 256.2Z" fill="#d9dca2" stroke="#9c9e62" stroke-width="0.33" stroke-linejoin="round"/><path d="M588.2 264.8Q591.0 262.2 593.7 261.2L596.1 261.5Q596.0 259.6 594.9 258.2L593.2 259.9Q590.5 260.9 586.7 260.8Z" fill="#d9dca2" stroke="#9c9e62" stroke-width="0.33" stroke-linejoin="round"/><circle cx="571.7" cy="268.6" r="17.6" fill="#dcdfa6" stroke="#74763f" stroke-width="0.6"/><path d="M558.0 261.2Q562.0 254.5 569.9 252.8" stroke="#eceec6" stroke-width="1.41" fill="none" stroke-linecap="round"/><ellipse cx="568.2" cy="261.9" rx="3.0" ry="2.5" transform="rotate(0 568.2 261.9)" fill="#d5d89b" stroke="#64663a" stroke-width="0.60"/><ellipse cx="580.5" cy="266.0" rx="2.8" ry="3.3" transform="rotate(0 580.5 266.0)" fill="#d5d89b" stroke="#64663a" stroke-width="0.60"/><ellipse cx="564.7" cy="276.0" rx="3.2" ry="2.6" transform="rotate(10 564.7 276.0)" fill="#d5d89b" stroke="#64663a" stroke-width="0.60"/><ellipse cx="575.2" cy="279.2" rx="3.2" ry="2.3" transform="rotate(-10 575.2 279.2)" fill="#d5d89b" stroke="#64663a" stroke-width="0.60"/><path d="M532.0 285.1Q535.0 284.4 537.3 284.5L539.0 285.3Q539.5 284.1 539.1 282.9L537.4 283.5Q535.1 283.4 532.2 282.4Z" fill="#d9dca2" stroke="#9c9e62" stroke-width="0.28" stroke-linejoin="round"/><path d="M530.5 289.0Q533.3 289.4 535.2 290.3L536.3 291.7Q537.2 290.8 537.3 289.5L535.6 289.4Q533.8 288.5 531.6 286.6Z" fill="#d9dca2" stroke="#9c9e62" stroke-width="0.28" stroke-linejoin="round"/><path d="M527.8 291.7Q530.1 292.9 531.3 294.2L531.6 295.6Q532.8 295.1 533.4 293.9L532.0 293.5Q530.8 292.2 529.8 289.9Z" fill="#d9dca2" stroke="#9c9e62" stroke-width="0.28" stroke-linejoin="round"/><path d="M523.9 293.5Q525.4 295.4 526.0 296.9L525.7 298.3Q527.0 298.3 528.0 297.5L526.9 296.6Q526.4 295.0 526.4 292.6Z" fill="#d9dca2" stroke="#9c9e62" stroke-width="0.28" stroke-linejoin="round"/><path d="M519.0 293.3Q519.5 296.0 519.2 297.8L518.3 299.1Q519.5 299.7 520.8 299.4L520.2 297.9Q520.5 296.1 521.7 293.7Z" fill="#d9dca2" stroke="#9c9e62" stroke-width="0.28" stroke-linejoin="round"/><path d="M515.0 291.3Q514.4 293.9 513.4 295.5L512.1 296.2Q512.9 297.3 514.2 297.6L514.3 296.0Q515.3 294.4 517.3 292.7Z" fill="#d9dca2" stroke="#9c9e62" stroke-width="0.28" stroke-linejoin="round"/><path d="M512.3 287.8Q510.3 290.1 508.5 291.2L506.7 291.5Q507.0 292.8 508.1 293.6L509.1 292.1Q510.9 290.9 513.7 290.0Z" fill="#d9dca2" stroke="#9c9e62" stroke-width="0.28" stroke-linejoin="round"/><path d="M511.3 284.6Q509.2 286.0 507.5 286.5L506.1 286.1Q506.0 287.4 506.7 288.5L507.8 287.4Q509.5 287.0 512.0 287.2Z" fill="#d9dca2" stroke="#9c9e62" stroke-width="0.28" stroke-linejoin="round"/><path d="M512.0 279.3Q509.2 279.5 507.4 279.0L506.2 277.9Q505.5 279.0 505.6 280.3L507.1 280.0Q509.0 280.4 511.3 281.9Z" fill="#d9dca2" stroke="#9c9e62" stroke-width="0.28" stroke-linejoin="round"/><path d="M514.4 275.6Q511.9 274.7 510.5 273.5L509.9 272.1Q508.8 272.8 508.3 274.0L509.9 274.3Q511.3 275.5 512.8 277.7Z" fill="#d9dca2" stroke="#9c9e62" stroke-width="0.28" stroke-linejoin="round"/><path d="M517.2 273.7Q515.1 271.9 514.0 270.2L513.8 268.5Q512.5 268.8 511.7 269.8L513.1 270.7Q514.2 272.4 515.0 275.2Z" fill="#d9dca2" stroke="#9c9e62" stroke-width="0.28" stroke-linejoin="round"/><path d="M522.3 272.7Q521.2 270.3 521.1 268.6L521.7 267.2Q520.5 266.9 519.3 267.4L520.1 268.7Q520.2 270.4 519.6 272.9Z" fill="#d9dca2" stroke="#9c9e62" stroke-width="0.28" stroke-linejoin="round"/><path d="M525.8 273.5Q525.6 270.9 526.1 269.2L527.2 268.1Q526.1 267.3 524.8 267.4L525.1 268.9Q524.7 270.6 523.2 272.8Z" fill="#d9dca2" stroke="#9c9e62" stroke-width="0.28" stroke-linejoin="round"/><path d="M530.0 276.8Q531.4 274.2 532.8 272.7L534.5 272.1Q533.9 270.9 532.7 270.3L532.1 272.0Q530.6 273.5 528.1 274.9Z" fill="#d9dca2" stroke="#9c9e62" stroke-width="0.28" stroke-linejoin="round"/><path d="M531.6 279.8Q533.4 278.0 535.0 277.2L536.5 277.3Q536.3 276.0 535.4 275.1L534.5 276.3Q533.0 277.1 530.4 277.4Z" fill="#d9dca2" stroke="#9c9e62" stroke-width="0.28" stroke-linejoin="round"/><circle cx="521.7" cy="283.2" r="11.2" fill="#dcdfa6" stroke="#74763f" stroke-width="0.5"/><path d="M513.0 278.5Q515.5 274.2 520.6 273.1" stroke="#eceec6" stroke-width="0.90" fill="none" stroke-linecap="round"/><ellipse cx="519.5" cy="278.7" rx="1.9" ry="1.7" transform="rotate(0 519.5 278.7)" fill="#d5d89b" stroke="#64663a" stroke-width="0.50"/><ellipse cx="527.3" cy="280.4" rx="1.7" ry="1.9" transform="rotate(0 527.3 280.4)" fill="#d5d89b" stroke="#64663a" stroke-width="0.50"/><ellipse cx="517.8" cy="287.9" rx="1.9" ry="1.6" transform="rotate(0 517.8 287.9)" fill="#d5d89b" stroke="#64663a" stroke-width="0.50"/><ellipse cx="524.5" cy="289.4" rx="1.8" ry="1.5" transform="rotate(0 524.5 289.4)" fill="#d5d89b" stroke="#64663a" stroke-width="0.50"/></svg>
<svg style="left:500px;top:440px" width="140" height="139" viewBox="500 440 140 139"><defs><clipPath id="gc"><rect x="500" y="440" width="119" height="139"/></clipPath></defs><g clip-path="url(#gc)" stroke-linejoin="round" stroke-linecap="round"><path d="M523.4 512Q521 486 538 473.5Q556 463.5 574 470.5Q590 478 592.5 500Q594 522 602 541Q592 546 583.5 541.5L580 520L534 526Q526 524 523.4 512Z" fill="#c8935d" stroke="#6a5848" stroke-width="1.3"/><path d="M549 541L560 538L572 539.5Q579 543 580.5 556L582.5 579H549L547.5 566Q543 560 545.5 553Z" fill="#5b668c" stroke="#3f4866" stroke-width="1"/><path d="M561 540L564 545.5L567.5 540.5L566 560L563.4 563L562 548Z" fill="#fff" stroke="#8890a8" stroke-width="0.5"/><path d="M556.5 541L562.5 552L561 562M571 541L566.5 552L567 562" fill="none" stroke="#3f4866" stroke-width="0.9"/><path d="M547.6 566Q553 571 558 566.5M550 572.5H578" fill="none" stroke="#3f4866" stroke-width="0.9"/><path d="M531.5 497Q531 484 545 482L586 490Q589.5 508 584 522Q577 537 560 538.5Q544 538 536 527Q531 518 531.5 497Z" fill="#fde7d0" stroke="#6a5848" stroke-width="1.1"/><path d="M531.4 513.5Q526.5 511.5 526.6 517Q527.4 523.5 533 523.5Z" fill="#fde7d0" stroke="#6a5848" stroke-width="1"/><path d="M586.6 500.5Q591.5 498.5 592 504Q591.6 510.5 586.4 511.5Z" fill="#fde7d0" stroke="#6a5848" stroke-width="1"/><path d="M530.5 494Q530 475 548 470Q572 465 585.5 480Q590 487 589 494Q572 494.5 557 489Q544 484.5 530.5 494Z" fill="#c8935d" stroke="#6a5848" stroke-width="1.1"/><path d="M559 479.5Q568 485.5 573 490.5M565.5 487.5L572.5 485.6" fill="none" stroke="#6a5848" stroke-width="0.9"/><ellipse cx="546.3" cy="509" rx="1.9" ry="3.3" fill="#2c2420"/><ellipse cx="569.4" cy="505" rx="1.9" ry="3.3" fill="#2c2420"/><path d="M541 498.5Q545 495.6 549 497M565.5 494.5Q570 492.6 574 494.6" fill="none" stroke="#6a5848" stroke-width="0.8"/><path d="M557.8 517.5L559.4 519.5" stroke="#b08a70" stroke-width="0.8"/><ellipse cx="562.4" cy="527" rx="2.7" ry="4.4" fill="#e88a90" stroke="#7a3a3a" stroke-width="0.9" transform="rotate(8 562.4 527)"/><path d="M543.6 528.5Q545.6 526 547.6 529L552 541Q557.5 544.5 556.5 550Q553.5 556 547.5 553Q543.5 550 545 544Z" fill="#fde7d0" stroke="#6a5848" stroke-width="1"/><path d="M597 482Q598 475.4 604.4 475.6Q610.4 476.6 609.4 482.6Q608.4 486.4 603.6 488.4Q600.6 490 600.4 493.6" fill="none" stroke="#8f9fd8" stroke-width="1.4"/><circle cx="598.8" cy="498.4" r="1" fill="#8f9fd8"/></g></svg>
<div class="a" style="left:69.9px;top:629.8px;width:35.6px;height:35.6px;border-radius:50%;background:#6264a7;color:#fff;font-size:11.5px;font-weight:700;line-height:35.6px;text-align:center;letter-spacing:-0.4px;transform:scaleX(1.002)">+11</div>
<div class="a" style="left:138.9px;top:629.1px;width:37px;height:37px;border-radius:50%;background:#d4e9e0;color:#2a5e48;font-size:12.5px;font-weight:700;line-height:37px;text-align:center;letter-spacing:-0.3px;transform:scaleX(1.002)">БС</div>
<svg style="left:209.0px;top:628.7px" width="37" height="37" viewBox="0 0 26 26"><defs><clipPath id="c5"><circle cx="13.0" cy="13.0" r="13.0"/></clipPath><filter id="f5" x="-10%" y="-10%" width="120%" height="120%"><feGaussianBlur stdDeviation="0.7"/></filter></defs><g clip-path="url(#c5)"><rect width="26" height="26" fill="#8a9082"/><g filter="url(#f5)"><rect width="26" height="26" fill="#8e9684"/><rect x="17" y="6" width="9" height="20" fill="#a9b09a"/><rect x="0" y="0" width="26" height="7" fill="#9a9cae"/><path d="M0 9Q3 8 5.4 10V16L0 17Z" fill="#c6b0b0"/><path d="M2.4 9Q3 1.4 11.6 0.6Q19 0.6 21 6L17 8.4L4 10.4Z" fill="#b6b6c8"/><path d="M5 4.6L8 3.4M7 7L10.4 5.4M11 2.4L13.6 2" stroke="#3a3c66" stroke-width="1.1"/><path d="M16.4 5.6Q20 5 22.6 8.4L22 9.6L16.6 8.4Z" fill="#1a1428"/><rect x="11.4" y="7.6" width="6.4" height="4.2" fill="#b07a6a"/><path d="M12.6 9.4H14.4M15.6 9.4H17" stroke="#3a2420" stroke-width="0.7"/><path d="M3.6 11.4Q6 10 9 11L17.8 11V15Q17.4 21 14 24Q10 26 6.4 23Q3 18 3.6 11.4Z" fill="#1a0c27"/><path d="M16 16.4Q18.4 15.4 20 17.4L19.6 19.6L16.4 19.4Z" fill="#e6cf8a"/><path d="M13.8 21.4Q16.6 19.6 19.4 21L18.6 24.6Q16 26 12.6 25.4Z" fill="#e677c6"/></g></g></svg>
<svg style="left:263px;top:608px" width="150" height="79" viewBox="263 608 150 79"><defs><clipPath id="c6"><rect x="263" y="608" width="150" height="79"/></clipPath><filter id="f6" x="-5%" y="-5%" width="110%" height="110%"><feGaussianBlur stdDeviation="0.9"/></filter></defs><g clip-path="url(#c6)"><rect x="263" y="608" width="150" height="79" fill="#c8c8c4"/><g filter="url(#f6)"></g><defs><filter id="g6" x="-5%" y="-5%" width="110%" height="110%"><feGaussianBlur stdDeviation="1.6"/></filter></defs><g><g filter="url(#g6)"><rect x="263" y="606" width="7.5" height="84" fill="#9a9b9c"/><rect x="270" y="606" width="9.5" height="84" fill="#d9d9d6"/><rect x="279" y="606" width="8.5" height="84" fill="#c4c4c1"/><rect x="287" y="606" width="9.5" height="84" fill="#e6e6e3"/><rect x="296" y="606" width="7.5" height="84" fill="#cbcbc8"/><rect x="303" y="606" width="8.5" height="84" fill="#e3e3e0"/><rect x="311" y="606" width="7.5" height="84" fill="#b9b9b7"/><rect x="318" y="606" width="8.5" height="84" fill="#e8e8e5"/><rect x="326" y="606" width="7.5" height="84" fill="#c2c2bf"/><rect x="333" y="606" width="8.5" height="84" fill="#e1e1de"/><rect x="341" y="606" width="8.5" height="84" fill="#c6c6c3"/><rect x="349" y="606" width="8.5" height="84" fill="#dddcd8"/><rect x="357" y="606" width="8.5" height="84" fill="#b7b7b4"/><rect x="365" y="606" width="7.5" height="84" fill="#d6d6d1"/><rect x="372" y="606" width="6.5" height="84" fill="#bdbdb9"/></g></g><g filter="url(#f6)"><rect x="376" y="606" width="40" height="84" fill="#2b2a30"/><rect x="382" y="612" width="10" height="46" fill="#2c3247"/><rect x="396" y="640" width="12" height="40" fill="#3a4662"/><rect x="401" y="655" width="6" height="8" fill="#7088b8"/><path d="M391 606H416V652Q404 632 391 606Z" fill="#8f9060"/><path d="M398 606H404L414 640V628Z" fill="#b4b47c"/><path d="M406 606H410L416 622V612Z" fill="#a8a872"/><rect x="384" y="662" width="24" height="26" fill="#6a7078"/><path d="M327 690L330 668L345 672L361 650L378 654L394 684L396 690Z" fill="#15151b"/><path d="M345 652Q356 646 361 652L358 668L346 674Z" fill="#9c8e8e"/><path d="M324 660Q330 654 346 656L347 668Q340 674 331 671Q325 668 324 660Z" fill="#cfae9e"/><path d="M320 652Q318 632 336 627.4Q350 626 355 640Q357 648 352 655L346 657Q332 655 323 661Z" fill="#b8985e"/><path d="M326 640Q334 630 346 632" stroke="#dcc898" stroke-width="3" fill="none"/><path d="M325 663.4L338 661L346 657" stroke="#222" stroke-width="1.2" fill="none"/></g></g></svg>
<div class="a" style="left:413px;top:608px;width:150px;height:79px;background:#383838"></div>
<svg style="left:469.8px;top:629.6px" width="36" height="36" viewBox="0 0 26 26"><defs><clipPath id="c7"><circle cx="13.0" cy="13.0" r="13.0"/></clipPath><filter id="f7" x="-10%" y="-10%" width="120%" height="120%"><feGaussianBlur stdDeviation="0.6"/></filter></defs><g clip-path="url(#c7)"><rect width="26" height="26" fill="#0a0f11"/><g filter="url(#f7)"><path d="M10.4 -2H30V30H4L7 24.6L11.6 20.4Q10 16 9.6 10.4Q9 5 10.4 -2Z" fill="#c2a286"/><ellipse cx="15" cy="5.4" rx="5" ry="3.6" fill="#dcbc9c"/><path d="M21 3Q26 8 25.6 16L22 21L20 12Z" fill="#7f7266"/><path d="M6 26Q8 22.4 12 22L20 22.6Q23 23 24 26Z" fill="#d2b49a"/><path d="M10.6 9.2Q13 8.2 15 9M17 9.2Q19.6 8.4 21 9.4" stroke="#4a382c" stroke-width="0.9" fill="none"/><path d="M11.2 10.6H14M17.4 10.8H20" stroke="#5a4438" stroke-width="0.8"/><path d="M12.4 11Q11 14.6 12.6 15.6L14.4 15.2" stroke="#8a6a58" stroke-width="0.9" fill="none"/><path d="M12.6 18.2H16" stroke="#a07868" stroke-width="0.8"/></g></g></svg>
<svg style="left:563px;top:608px" width="150" height="79" viewBox="563 608 150 79"><defs><clipPath id="c8"><rect x="563" y="608" width="150" height="79"/></clipPath><filter id="f8" x="-5%" y="-5%" width="110%" height="110%"><feGaussianBlur stdDeviation="0.9"/></filter></defs><g clip-path="url(#c8)"><rect x="563" y="608" width="150" height="79" fill="#d6d8da"/><g filter="url(#f8)"><rect x="563" y="606" width="150" height="84" fill="#d6d8da"/><rect x="563" y="606" width="60" height="84" fill="#cfd1d4"/><rect x="561" y="639" width="17" height="50" fill="#85878c"/><rect x="681" y="606" width="34" height="84" fill="#9fa1a1"/><rect x="683" y="628" width="7" height="38" fill="#3c3c3a"/><rect x="692" y="620" width="16" height="60" fill="#b9bbbb"/><rect x="706" y="634" width="8" height="54" fill="#d4d6d6"/><path d="M612 656Q620 640 622 624Q626 606 646 605Q666 606 669 624Q672 642 674 654Q668 660 660 660H628Q618 660 612 656Z" fill="#3b2b2a"/><path d="M628 640Q626 616 636 610H657Q666 618 664 640Q662 658 654 666Q646 672 638 666Q630 658 628 640Z" fill="#d9b5a9"/><path d="M626 624Q629 606 646 605Q664 606 667 624Q661 615 651 613.6Q640 613.6 634 616.6Q629 619 626 624Z" fill="#3b2b2a"/><path d="M591 690L599 669Q608 660 620 658L633 663L646 671L660 662L676 656Q690 660 696 669L706 690Z" fill="#d15c6c"/><rect x="630.6" y="663" width="4.6" height="26" fill="#f4f0f0"/><rect x="659.4" y="663" width="5.2" height="26" fill="#f4f0f0"/><path d="M633 636H641M651 636H659" stroke="#5a4038" stroke-width="1.3"/><path d="M642 648Q646 650 650 648" stroke="#b08878" stroke-width="1.2" fill="none"/><path d="M640 656.4H652" stroke="#a86060" stroke-width="1.3"/></g></g></svg>
<div class="a" style="left:713px;top:608px;width:150px;height:79px;background:#383838"></div>
<div class="a" style="left:768.9px;top:628.8px;width:37.4px;height:37.4px;border-radius:50%;background:#d6eeee;color:#356a6a;font-size:14px;font-weight:700;line-height:37.4px;text-align:center;letter-spacing:0px;transform:scaleX(1.002)">ЛМ</div>
<svg style="left:863px;top:608px" width="150" height="79" viewBox="863 608 150 79"><defs><clipPath id="c9"><rect x="863" y="608" width="150" height="79"/></clipPath><filter id="f9" x="-5%" y="-5%" width="110%" height="110%"><feGaussianBlur stdDeviation="0.8"/></filter></defs><g clip-path="url(#c9)"><rect x="863" y="608" width="150" height="79" fill="#e4e6e8"/><g filter="url(#f9)"><rect x="861" y="606" width="20" height="84" fill="#c8cdda"/><rect x="879" y="606" width="13" height="84" fill="#b3b8c3"/><rect x="891" y="606" width="94" height="84" fill="#ecedf0"/><rect x="900" y="606" width="6" height="84" fill="#dcdfe4"/><rect x="930" y="606" width="10" height="30" fill="#d8dade"/><rect x="983" y="606" width="32" height="84" fill="#5f5846"/><rect x="1006" y="606" width="9" height="84" fill="#6c6a5c"/><ellipse cx="873" cy="620" rx="4.6" ry="4.8" fill="none" stroke="#a9a5b3" stroke-width="1.8"/><ellipse cx="870.6" cy="638" rx="4.6" ry="4.8" fill="none" stroke="#a9a5b3" stroke-width="1.8"/><ellipse cx="871.6" cy="657" rx="4.6" ry="4.8" fill="none" stroke="#a9a5b3" stroke-width="1.8"/><ellipse cx="870" cy="678" rx="4.6" ry="4.8" fill="none" stroke="#a9a5b3" stroke-width="1.8"/><path d="M914 652Q911 624 923 614.6Q934 608 942 608.6Q956 609.6 962 620Q966 630 964 642L962 656L915 660Z" fill="#43342f"/><path d="M888 690Q898 680 920 676L938 680L957 674Q980 678 992 690Z" fill="#5b5b52"/><path d="M926 666H950L952 680Q938 686 924 680Z" fill="#c4a89e"/><path d="M920 642Q919.6 628 927 623.4Q938 620.6 951 623Q960.6 627 960.4 644Q959 660 950 669Q940 677 931 669Q921 660 920 642Z" fill="#d0b5ab"/><path d="M950 611.4Q964 616 965 638" fill="none" stroke="#2038a8" stroke-width="1.8"/><path d="M915.6 640Q914 622 924 614.6" fill="none" stroke="#2a2c50" stroke-width="1.4"/><rect x="909" y="637" width="11" height="22" rx="5" fill="#2747d0"/><rect x="960" y="636" width="11" height="23" rx="5" fill="#2747d0"/><path d="M966 658L965 690" stroke="#1c2c70" stroke-width="1"/><ellipse cx="931.6" cy="647" rx="2.6" ry="1.7" fill="#3a2a26"/><ellipse cx="950.6" cy="647" rx="2.6" ry="1.7" fill="#3a2a26"/><path d="M926 641.6Q932 639.4 937 641.6M946 641.6Q951 639.4 957 641.6" stroke="#5a463e" stroke-width="1.2" fill="none"/><path d="M940 648V660" stroke="#b89a8e" stroke-width="2.4"/><path d="M935 667.6H948" stroke="#a87068" stroke-width="1.6"/></g></g></svg>
<span class="tx" style="left:274.90px;top:671.47px;font-size:9.6px;line-height:9.6px;color:#fff;font-weight:700;transform:scaleX(0.9463);text-shadow:0 0 2px rgba(0,0,0,.6),0 0 1px rgba(0,0,0,.5);">Остапчук Анна Валер...</span><svg style="left:390.8px;top:670.6px" width="10" height="11" viewBox="0 0 10 11" fill="none" stroke="#fff" stroke-width="0.95" stroke-linecap="round"><rect x="3.6" y="1.6" width="3.2" height="4.8" rx="1.6" fill="#fff" fill-opacity="0.55"/><path d="M2 5.4Q2.2 8.2 5.2 8.2Q8.2 8.2 8.4 5.4M5.2 8.4V9.4"/><path d="M1 9.8L9.2 1"/></svg>
<span class="tx" style="left:425.00px;top:671.47px;font-size:9.6px;line-height:9.6px;color:#fff;font-weight:700;transform:scaleX(0.9512);text-shadow:0 0 2px rgba(0,0,0,.6),0 0 1px rgba(0,0,0,.5);">Мищенко Степан Ігор...</span><svg style="left:540.8px;top:670.6px" width="10" height="11" viewBox="0 0 10 11" fill="none" stroke="#fff" stroke-width="0.95" stroke-linecap="round"><rect x="3.6" y="1.6" width="3.2" height="4.8" rx="1.6" fill="#fff" fill-opacity="0.55"/><path d="M2 5.4Q2.2 8.2 5.2 8.2Q8.2 8.2 8.4 5.4M5.2 8.4V9.4"/><path d="M1 9.8L9.2 1"/></svg>
<span class="tx" style="left:574.90px;top:671.47px;font-size:9.6px;line-height:9.6px;color:#fff;font-weight:700;transform:scaleX(0.9251);text-shadow:0 0 2px rgba(0,0,0,.6),0 0 1px rgba(0,0,0,.5);">Булгакова Валерія Ол...</span><svg style="left:690.8px;top:670.6px" width="10" height="11" viewBox="0 0 10 11" fill="none" stroke="#fff" stroke-width="0.95" stroke-linecap="round"><rect x="3.6" y="1.6" width="3.2" height="4.8" rx="1.6" fill="#fff" fill-opacity="0.55"/><path d="M2 5.4Q2.2 8.2 5.2 8.2Q8.2 8.2 8.4 5.4M5.2 8.4V9.4"/><path d="M1 9.8L9.2 1"/></svg>
<span class="tx" style="left:724.90px;top:671.47px;font-size:9.6px;line-height:9.6px;color:#fff;font-weight:700;transform:scaleX(0.9885);text-shadow:0 0 2px rgba(0,0,0,.6),0 0 1px rgba(0,0,0,.5);">Лазоренко Тетяна М...</span><svg style="left:840.8px;top:670.6px" width="10" height="11" viewBox="0 0 10 11" fill="none" stroke="#fff" stroke-width="0.95" stroke-linecap="round"><rect x="3.6" y="1.6" width="3.2" height="4.8" rx="1.6" fill="#fff" fill-opacity="0.55"/><path d="M2 5.4Q2.2 8.2 5.2 8.2Q8.2 8.2 8.4 5.4M5.2 8.4V9.4"/><path d="M1 9.8L9.2 1"/></svg>
<div class="a" style="left:0;top:687px;width:1280px;height:33px;background:radial-gradient(ellipse 150px 60px at 200px 16px,rgba(176,98,150,.85),rgba(176,98,150,0) 100%),radial-gradient(ellipse 260px 70px at 790px 20px,rgba(130,86,124,.75),rgba(130,86,124,0) 100%),linear-gradient(90deg,#6a4665 0,#784e73 50px,#7a5277 260px,#55475f 340px,#4c4257 480px,#54445c 640px,#553f57 1000px,#553c55 1100px,#4f374f 1200px,#4a334a 1280px)"></div>
<div class="a" style="left:43px;top:687.5px;width:40px;height:31px;background:rgba(160,140,165,.45);border:1px solid rgba(200,185,205,.45)"></div>
<div class="a" style="left:84.4px;top:687.5px;width:40px;height:31px;background:rgba(160,140,165,.4);border:1px solid rgba(200,185,205,.4)"></div>
<div class="a" style="left:125.8px;top:687.5px;width:39.6px;height:31px;background:rgba(160,140,165,.42);border:1px solid rgba(200,185,205,.42)"></div>
<div class="a" style="left:250px;top:687.5px;width:36px;height:31px;background:rgba(200,185,210,.78);border:1px solid rgba(225,212,232,.9)"></div>
<div class="a" style="left:287.4px;top:688px;width:2px;height:31px;background:#3b2c3d"></div>
<div class="a" style="left:290.8px;top:687.5px;width:40.2px;height:31px;background:rgba(165,150,175,.62);border:1px solid rgba(200,188,208,.6)"></div>
<svg style="left:11px;top:695px" width="18" height="16" viewBox="0 0 18 16" fill="#fff"><path d="M0 2.2L7.4 1.2V7.5H0ZM8.4 1.05L17.4 0V7.5H8.4ZM0 8.5H7.4V14.8L0 13.8ZM8.4 8.5H17.4V16L8.4 14.95Z"/></svg>
<svg style="left:53px;top:694.5px" width="19" height="17" viewBox="0 0 19 17"><path d="M0.6 2Q0.6 1 1.6 1H6.6L8.2 2.8H17.6Q18.4 2.8 18.4 3.6V15.4H0.6Z" fill="#e8b730"/><rect x="0.6" y="4.2" width="17.8" height="11.6" fill="#f9d465"/><path d="M4 15.8V9.6H15V15.8H12.2V12.2H6.8V15.8Z" fill="#3f8fd2"/><rect x="4" y="9.6" width="11" height="1.6" fill="#2f7abc"/></svg>
<svg style="left:94.5px;top:693.5px" width="19" height="19" viewBox="-9.5 -9.5 19 19"><circle r="9.2" fill="#db4437"/><path d="M0 0L-7.97 -4.6A9.2 9.2 0 0 0 -0.0 9.2L4 2.3Z" fill="#0f9d58"/><path d="M0 0L3.98 2.3L0 9.2A9.2 9.2 0 0 0 7.97 -4.6H0Z" fill="#ffcd40"/><path d="M-7.97 -4.6A9.2 9.2 0 0 1 7.97 -4.6H0Z" fill="#db4437"/><circle r="4.3" fill="#fff"/><circle r="3.4" fill="#4285f4"/></svg>
<svg style="left:137px;top:694.8px" width="17" height="16.4" viewBox="0 0 17 16.4"><rect width="17" height="16.4" rx="2.6" fill="#7289da"/><path d="M4 5.4Q6 4.2 8.5 4.2Q11 4.2 13 5.4Q14.4 8 14.2 11Q13 12 11.4 12.2L10.8 11.2Q9.6 11.5 8.5 11.5Q7.4 11.5 6.2 11.2L5.6 12.2Q4 12 2.8 11Q2.6 8 4 5.4Z" fill="#fff"/><circle cx="6.6" cy="8.6" r="1.1" fill="#7289da"/><circle cx="10.4" cy="8.6" r="1.1" fill="#7289da"/></svg>
<svg style="left:176px;top:693px" width="20" height="20" viewBox="0 0 20 20"><circle cx="6.4" cy="6.6" r="5.6" fill="#16a4e4"/><circle cx="13.4" cy="13.4" r="5.8" fill="#1291d2"/><circle cx="10" cy="10" r="7.6" fill="#1aa7e6"/><text x="10" y="14.4" font-family="Liberation Sans,sans-serif" font-weight="700" font-size="12.5" fill="#fff" text-anchor="middle">S</text></svg>
<svg style="left:218px;top:693px" width="20.4" height="20.4" viewBox="0 0 20.4 20.4"><circle cx="10.2" cy="10.2" r="9.8" fill="#2a1c0a"/><circle cx="10.2" cy="10.2" r="8.6" fill="none" stroke="#c4922c" stroke-width="2"/><circle cx="10.2" cy="10.2" r="6.6" fill="#120c05"/><text x="10.2" y="14.6" font-family="Liberation Serif,serif" font-weight="700" font-size="12" fill="#e6b43a" text-anchor="middle">W</text></svg>
<svg style="left:257px;top:694px" width="22" height="20" viewBox="0 0 22 20"><circle cx="13" cy="3.2" r="2.6" fill="#7b83eb"/><circle cx="18.4" cy="4.2" r="2" fill="#5059c9"/><path d="M15.6 7H21Q21.6 7 21.6 7.8V12.4Q21.4 15 18.6 15.2Q16.4 15 15.6 13Z" fill="#5059c9"/><path d="M7 7H16.6Q17.2 7 17.2 7.8V13.4Q16.8 17.4 12.2 17.6Q7.6 17.4 7 13.4Z" fill="#7b83eb"/><rect x="1" y="3.6" width="11.2" height="11.2" rx="1.2" fill="#4b53bc"/><path d="M4 6.6H9.4M6.7 6.6V12.4" stroke="#fff" stroke-width="1.5"/><circle cx="17" cy="15.4" r="4" fill="#fff"/><circle cx="17" cy="15.4" r="3.1" fill="#e0002a"/></svg>
<svg style="left:301px;top:694px" width="20" height="18" viewBox="0 0 20 18"><rect x="9" y="1.8" width="10.4" height="14.4" fill="#fff" stroke="#2b579a" stroke-width="0.8"/><path d="M12 4.6H18M12 6.8H18M12 9H18M12 11.2H18M12 13.4H18" stroke="#2b579a" stroke-width="0.9"/><path d="M0.4 2L11.4 0.2V17.8L0.4 16Z" fill="#2b579a"/><path d="M2.6 6L4 12L5.8 6.6L7.6 12L9 6" fill="none" stroke="#fff" stroke-width="1.2" stroke-linejoin="round"/></svg>
<svg style="left:1029.6px;top:701.8px" width="7" height="4" viewBox="0 0 7 4"><path d="M0 4L3.5 0L7 4Z" fill="#fff"/></svg>
<svg style="left:1048px;top:697.5px" width="12" height="12" viewBox="0 0 12 12" fill="none" stroke="#fff" stroke-width="1"><path d="M2.6 1H6.6M2.6 11H6.6" /><rect x="1" y="2.8" width="7" height="6.4" rx="1.6"/><path d="M8.4 5L11 3.6V8.4L8.4 7Z"/></svg>
<svg style="left:1069px;top:697px" width="8" height="13" viewBox="0 0 8 13"><rect x="1.2" y="0.4" width="5.6" height="9.6" fill="#fff"/><rect x="0.4" y="11" width="7.2" height="1.4" fill="#fff"/></svg>
<svg style="left:1086px;top:699px" width="15" height="8" viewBox="0 0 15 8"><rect x="0.6" y="0.8" width="12" height="6.2" fill="#fff"/><rect x="13" y="2.6" width="1.4" height="2.6" fill="#fff"/><rect x="0" y="0" width="2.4" height="2.2" fill="#fff"/></svg>
<svg style="left:1108.4px;top:698.6px" width="12" height="11" viewBox="0 0 12 11" fill="none" stroke="#fff" stroke-width="1.1"><path d="M1 10.4A9.6 9.6 0 0 1 10.6 0.8"/><path d="M1 10.4M4.2 10.4A6.4 6.4 0 0 1 10.6 4"/><path d="M7.2 10.4A3.4 3.4 0 0 1 10.6 7"/><circle cx="10" cy="9.8" r="0.9" fill="#fff" stroke="none"/></svg>
<svg style="left:1127px;top:697.6px" width="15" height="12" viewBox="0 0 15 12" fill="none" stroke="#ddd" stroke-width="0.9"><path d="M1 4.4H3L5.6 2V10L3 7.6H1Z" stroke-dasharray="1.4 0.8"/><path d="M7.6 4.2Q8.8 6 7.6 7.8M9.6 2.6Q11.8 6 9.6 9.4M11.8 1.2Q14.6 6 11.8 10.8" stroke="#fff"/></svg>
<span class="tx" style="left:1150.00px;top:698.33px;font-size:10px;line-height:10px;color:#f0f0f0;transform:scaleX(0.8587);">РУС</span>
<span class="tx" style="left:1192.00px;top:690.01px;font-size:10.5px;line-height:10.5px;color:#f4f4f4;transform:scaleX(0.7990);">10:37</span>
<span class="tx" style="left:1179.80px;top:705.11px;font-size:10.5px;line-height:10.5px;color:#f4f4f4;transform:scaleX(0.8561);">15.02.2021</span>
<svg style="left:1240.6px;top:696.6px" width="15" height="13" viewBox="0 0 15 13"><path d="M0.6 0.6H13.8V9.2H4.6L2.2 12V9.2H0.6Z" fill="#fff"/><path d="M2.6 3H11.8M2.6 5H11.8M2.6 7H8" stroke="#4a3f52" stroke-width="0.8"/></svg>
<div class="a" style="left:1247.8px;top:704.6px;width:12px;height:12px;border-radius:50%;background:#1c6fc2;border:1.2px solid #7fb2e6;color:#fff;font-size:8.5px;font-weight:700;line-height:9.6px;text-align:center;transform:scaleX(1.002)">3</div>
</body></html>
